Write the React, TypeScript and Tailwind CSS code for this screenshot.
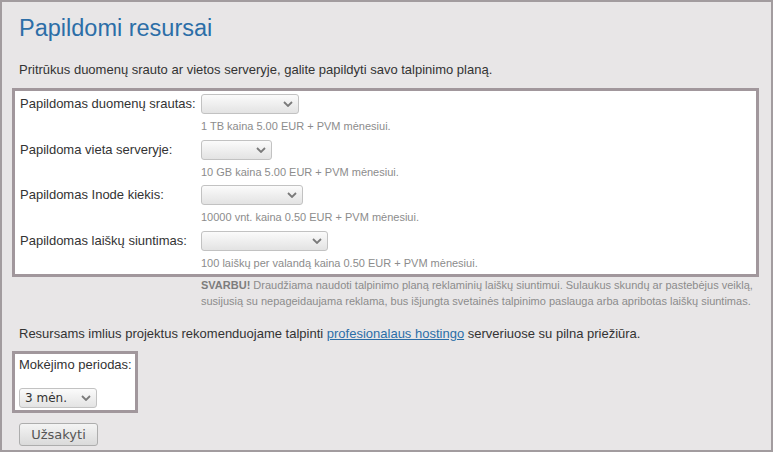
import React from "react";

const hints = [
  { label: "Papildomas duomenų srautas:", width: "w-[98px]", hint: "1 TB kaina 5.00 EUR + PVM mėnesiui." },
  { label: "Papildoma vieta serveryje:", width: "w-[71px]", hint: "10 GB kaina 5.00 EUR + PVM mėnesiui." },
  { label: "Papildomas Inode kiekis:", width: "w-[102px]", hint: "10000 vnt. kaina 0.50 EUR + PVM mėnesiui." },
  { label: "Papildomas laiškų siuntimas:", width: "w-[127px]", hint: "100 laiškų per valandą kaina 0.50 EUR + PVM mėnesiui." },
];

function Chevron() {
  return (
    <svg width="10" height="6" viewBox="0 0 10 6" className="shrink-0">
      <path d="M1 1 L5 5 L9 1" fill="none" stroke="#7a7a7a" strokeWidth="1.8" />
    </svg>
  );
}

function FakeSelect({ width, value }: { width: string; value?: string }) {
  return (
    <div
      className={`${width} flex h-[20px] items-center justify-between rounded-[3px] border border-[#c2c2c2] bg-gradient-to-b from-[#fbfbfb] to-[#e3e3e3] pl-[5px] pr-[5px] font-['DejaVu_Sans',sans-serif] text-[12px] text-[#333]`}
    >
      <span>{value ?? ""}</span>
      <Chevron />
    </div>
  );
}

export default function App() {
  return (
    <div className="box-border h-[452px] w-[773px] border-2 border-[#a29c9f] bg-[#e8e6e7] font-['Liberation_Sans',Arial,sans-serif] text-[13px] text-[#333]">
      <div className="pl-[10px] pr-[12px] pt-[12px]">
        <h1 className="ml-[7px] text-[23.5px] leading-[28px] font-normal text-[#2c6ea7]">
          Papildomi resursai
        </h1>
        <p className="ml-[7px] mt-[20px] leading-[16px]">
          Pritrūkus duomenų srauto ar vietos serveryje, galite papildyti savo talpinimo planą.
        </p>

        <div className="mt-[10px] border-[3px] border-[#a1979c] bg-white pl-[5px] pt-[1px]">
          {hints.map((row) => (
            <div key={row.label}>
              <div className="flex h-[24px] items-center">
                <span className="w-[181px] shrink-0">{row.label}</span>
                <FakeSelect width={row.width} />
              </div>
              <div className="h-[21.5px] pl-[181px] text-[11px] leading-[21.5px] text-[#8c8c8c]">
                {row.hint}
              </div>
            </div>
          ))}
        </div>

        <p className="pl-[189px] text-[11px] leading-[16px] text-[#8c8c8c]">
          <b className="text-[#7d7d7d]">SVARBU!</b> Draudžiama naudoti talpinimo planą reklaminių laiškų siuntimui. Sulaukus skundų ar pastebėjus veiklą,
          <br />
          susijusią su nepageidaujama reklama, bus išjungta svetainės talpinimo paslauga arba apribotas laiškų siuntimas.
        </p>

        <p className="ml-[7px] mt-[17px] leading-[16px]">
          Resursams imlius projektus rekomenduojame talpinti{" "}
          <a href="#" className="text-[#2c6ea7] underline">
            profesionalaus hostingo
          </a>{" "}
          serveriuose su pilna priežiūra.
        </p>

        <div className="mt-[9px] inline-block border-[3px] border-[#a1979c] bg-white pb-[2px] pl-[4px] pr-[3px] pt-[3px]">
          <div className="leading-[16px]">Mokėjimo periodas:</div>
          <div className="mt-[15px]">
            <FakeSelect width="w-[78px]" value="3 mėn." />
          </div>
        </div>

        <div className="ml-[7px] mt-[10px]">
          <button
            type="button"
            className="h-[23px] w-[79px] rounded-[3px] border border-[#adadad] bg-gradient-to-b from-[#f4f4f4] to-[#dadada] font-['DejaVu_Sans',sans-serif] text-[13px] text-[#555]"
          >
            Užsakyti
          </button>
        </div>
      </div>
    </div>
  );
}
